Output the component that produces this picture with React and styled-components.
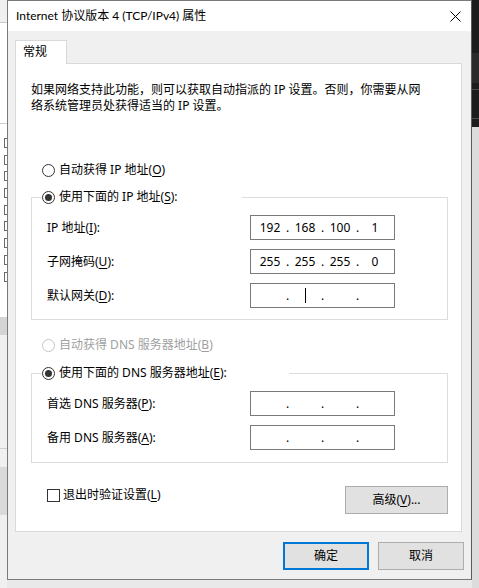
import React from "react";
import styled, { createGlobalStyle } from "styled-components";

const GlobalStyle = createGlobalStyle`
  html, body {
    margin: 0;
    padding: 0;
    overflow: hidden;
    background: #f0f0f0;
  }
  body {
    font-family: "Noto Sans", "Noto Sans CJK SC", sans-serif;
    font-size: 12px;
    color: #000;
  }
`;

const leftBands = [
  { h: 22, bg: "#f0f0f0" },
  { h: 1, bg: "#c8c8c8" },
  { h: 100, bg: "#ffffff" },
  { h: 1, bg: "#d0d0d0" },
  { h: 193, bg: "#ffffff", ticks: true },
  { h: 18, bg: "#d4d4d4" },
  { h: 113, bg: "#f0f0f0" },
  { h: 1, bg: "#cfcfcf" },
  { h: 18, bg: "#f0f0f0" },
  { h: 48, bg: "#dadada" },
  { h: 73, bg: "#f0f0f0" },
];

const rightBands = [
  { h: 53, bg: "#1c1c1c" },
  { h: 30, bg: "#2b2b2b" },
  { h: 6, bg: "#1c1c1c" },
  { h: 1, bg: "#4a4a4a" },
  { h: 28, bg: "#1c1c1c" },
  { h: 1, bg: "#4a4a4a" },
  { h: 8, bg: "#1c1c1c" },
  { h: 461, bg: "#dcdcdc" },
];

const CloseIcon = () => (
  <svg width="11" height="11" viewBox="0 0 11 11">
    <path d="M0.5 0.5 L10.5 10.5 M10.5 0.5 L0.5 10.5" stroke="#000" strokeWidth="1" fill="none" />
  </svg>
);

const IpField = ({ values = ["", "", "", ""], caret }) => (
  <IpBox>
    {values.map((v, i) => (
      <React.Fragment key={i}>
        {i > 0 && <Dot>.</Dot>}
        <Seg>{caret === i ? <Caret /> : v}</Seg>
      </React.Fragment>
    ))}
  </IpBox>
);

const Radio = ({ checked, disabled, children }) => (
  <RadioRow $disabled={disabled}>
    <RadioMark $checked={checked} $disabled={disabled} />
    <span>{children}</span>
  </RadioRow>
);

const App = () => {
  return (
    <>
      <GlobalStyle />
      <Page>
        <Strip>
          {leftBands.map((b, i) => (
            <Band key={i} $h={b.h} $bg={b.bg}>
              {b.ticks && (
                <TickColumn>
                  {Array.from({ length: 9 }).map((_, j) => (
                    <Tick key={j} />
                  ))}
                </TickColumn>
              )}
            </Band>
          ))}
        </Strip>

        <Center>
          <Dialog>
            <TitleBar>
              <TitleText>Internet 协议版本 4 (TCP/IPv4) 属性</TitleText>
              <CloseIcon />
            </TitleBar>
            <Body>
              <TabStrip>
                <Tab>常规</Tab>
              </TabStrip>
              <Panel>
                <Intro>
                  如果网络支持此功能，则可以获取自动指派的 IP 设置。否则，你需要从网
                  <br />
                  络系统管理员处获得适当的 IP 设置。
                </Intro>

                <RadioLine $top={48}>
                  <Radio>
                    自动获得 IP 地址(<Key>O</Key>)
                  </Radio>
                </RadioLine>

                <Group $top={11} $bottom={11}>
                  <GroupLegend $width={200}>
                    <Radio checked>
                      使用下面的 IP 地址(<Key>S</Key>):
                    </Radio>
                  </GroupLegend>
                  <FieldGrid>
                    <FieldLabel>
                      IP 地址(<Key>I</Key>):
                    </FieldLabel>
                    <IpField values={["192", "168", "100", "1"]} />
                    <FieldLabel>
                      子网掩码(<Key>U</Key>):
                    </FieldLabel>
                    <IpField values={["255", "255", "255", "0"]} />
                    <FieldLabel>
                      默认网关(<Key>D</Key>):
                    </FieldLabel>
                    <IpField caret={1} />
                  </FieldGrid>
                </Group>

                <RadioLine $top={17}>
                  <Radio disabled>
                    自动获得 DNS 服务器地址(<Key>B</Key>)
                  </Radio>
                </RadioLine>

                <Group $top={12} $bottom={12}>
                  <GroupLegend $width={247}>
                    <Radio checked>
                      使用下面的 DNS 服务器地址(<Key>E</Key>):
                    </Radio>
                  </GroupLegend>
                  <FieldGrid>
                    <FieldLabel>
                      首选 DNS 服务器(<Key>P</Key>):
                    </FieldLabel>
                    <IpField />
                    <FieldLabel>
                      备用 DNS 服务器(<Key>A</Key>):
                    </FieldLabel>
                    <IpField />
                  </FieldGrid>
                </Group>

                <FooterRow>
                  <CheckRow>
                    <CheckBox />
                    <span>
                      退出时验证设置(<Key>L</Key>)
                    </span>
                  </CheckRow>
                  <Button $width={103}>
                    高级(<Key>V</Key>)...
                  </Button>
                </FooterRow>
              </Panel>

              <ButtonBar>
                <Button $width={86} $primary>
                  确定
                </Button>
                <Button $width={86}>取消</Button>
              </ButtonBar>
            </Body>
          </Dialog>
          <Shade />
        </Center>

        <Strip>
          {rightBands.map((b, i) => (
            <Band key={i} $h={b.h} $bg={b.bg} />
          ))}
        </Strip>
      </Page>
    </>
  );
};

const Page = styled.div`
  display: flex;
  width: 479px;
  height: 588px;
  overflow: hidden;
`;

const Strip = styled.div`
  width: 7px;
  flex-shrink: 0;
  display: flex;
  flex-direction: column;
  overflow: hidden;
`;

const Band = styled.div`
  height: ${(p) => p.$h}px;
  background: ${(p) => p.$bg};
  flex-shrink: 0;
  overflow: hidden;
`;

const TickColumn = styled.div`
  display: flex;
  flex-direction: column;
  gap: 6.7px;
  padding: 14px 0 0 4px;
`;

const Tick = styled.div`
  width: 6px;
  height: 10px;
  box-sizing: border-box;
  border: 1px solid #6a6a6a;
  border-right: none;
`;

const Center = styled.div`
  width: 465px;
  flex-shrink: 0;
  display: flex;
  flex-direction: column;
`;

const Dialog = styled.div`
  width: 465px;
  height: 580px;
  box-sizing: border-box;
  border: 1px solid #7a7a7a;
  border-right-color: #5a5a5a;
  background: #f0f0f0;
  display: flex;
  flex-direction: column;
`;

const Shade = styled.div`
  height: 8px;
  background: #e9e9e9;
`;

const TitleBar = styled.div`
  height: 30px;
  flex-shrink: 0;
  background: #fff;
  display: flex;
  align-items: center;
  justify-content: space-between;
  padding: 0 10px 0 8px;
`;

const TitleText = styled.div`
  font-family: "Lato", "Noto Sans CJK SC", sans-serif;
  font-size: 12px;
  line-height: 16px;
`;

const Body = styled.div`
  flex: 1;
  padding: 9px 7px 0 7px;
  display: flex;
  flex-direction: column;
`;

const TabStrip = styled.div`
  display: flex;
`;

const Tab = styled.div`
  width: 52px;
  height: 24px;
  box-sizing: border-box;
  border: 1px solid #d9d9d9;
  border-bottom: none;
  background: #fff;
  padding-left: 7px;
  line-height: 22px;
  margin-bottom: -1px;
  position: relative;
  z-index: 1;
`;

const Panel = styled.div`
  width: 447px;
  height: 469px;
  box-sizing: border-box;
  background: #fff;
  border: 1px solid #d9d9d9;
  padding: 18px 13px 17px 15px;
  display: flex;
  flex-direction: column;
`;

const Intro = styled.p`
  margin: 0;
  line-height: 16px;
  white-space: nowrap;
`;

const RadioLine = styled.div`
  display: flex;
  height: 16px;
  margin-top: ${(p) => p.$top}px;
  padding-left: 11px;
`;

const RadioRow = styled.label`
  display: flex;
  align-items: center;
  gap: 4px;
  height: 16px;
  line-height: 16px;
  white-space: nowrap;
  color: ${(p) => (p.$disabled ? "#a0a0a0" : "#000")};
`;

const RadioMark = styled.span`
  width: 13px;
  height: 13px;
  box-sizing: border-box;
  border-radius: 50%;
  border: 1px solid ${(p) => (p.$disabled ? "#c4c4c4" : "#333")};
  background: #fff;
  display: flex;
  align-items: center;
  justify-content: center;
  flex-shrink: 0;

  &::after {
    content: "";
    width: 7px;
    height: 7px;
    border-radius: 50%;
    background: #333;
    display: ${(p) => (p.$checked ? "block" : "none")};
  }
`;

const Key = styled.span`
  text-decoration: underline;
  text-underline-offset: 2px;
`;

const Group = styled.fieldset`
  margin: ${(p) => p.$top}px 0 0 0;
  padding: 0 15px ${(p) => p.$bottom}px 15px;
  border: 1px solid #dcdcdc;
  min-width: 0;
`;

const GroupLegend = styled.legend`
  display: flex;
  padding: 0;
  margin-left: -5px;
  width: ${(p) => p.$width}px;
  height: 16px;
  line-height: 16px;
  background: #fff;
`;

const FieldGrid = styled.div`
  display: grid;
  grid-template-columns: 203px 145px;
  grid-auto-rows: 25px;
  row-gap: 9px;
  align-items: center;
  margin-top: 10px;
`;

const FieldLabel = styled.div`
  line-height: 16px;
  white-space: nowrap;
`;

const IpBox = styled.div`
  height: 25px;
  box-sizing: border-box;
  border: 1px solid #7a7a7a;
  background: #fff;
  display: flex;
  align-items: center;
  padding-left: 4px;
`;

const Seg = styled.span`
  width: 30px;
  height: 16px;
  display: flex;
  align-items: center;
  justify-content: center;
  line-height: 16px;
`;

const Dot = styled.span`
  width: 5px;
  text-align: center;
  line-height: 16px;
`;

const Caret = styled.span`
  width: 1px;
  height: 15px;
  background: #000;
`;

const FooterRow = styled.div`
  margin-top: 23px;
  display: flex;
  justify-content: space-between;
  align-items: flex-start;
`;

const CheckRow = styled.label`
  display: flex;
  align-items: center;
  gap: 3px;
  margin: 1px 0 0 16px;
  height: 16px;
  line-height: 16px;
  white-space: nowrap;
`;

const CheckBox = styled.span`
  width: 13px;
  height: 13px;
  box-sizing: border-box;
  border: 1px solid #333;
  background: #fff;
  flex-shrink: 0;
`;

const Button = styled.button`
  width: ${(p) => p.$width}px;
  height: 28px;
  box-sizing: border-box;
  background: #e1e1e1;
  border: ${(p) => (p.$primary ? "2px solid #0078d7" : "1px solid #adadad")};
  font-family: "Noto Sans", "Noto Sans CJK SC", sans-serif;
  font-size: 12px;
  color: #000;
  padding: 0;
  line-height: 16px;
`;

const ButtonBar = styled.div`
  margin-top: 10px;
  display: flex;
  justify-content: flex-end;
  gap: 9px;
`;

export default App;
